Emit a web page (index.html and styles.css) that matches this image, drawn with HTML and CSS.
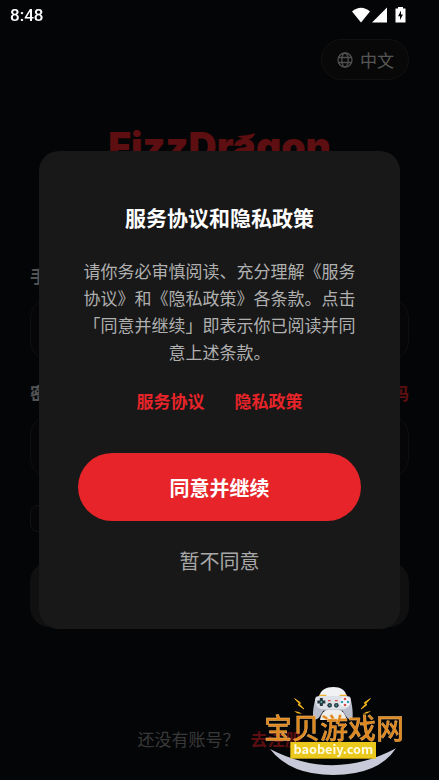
FILE: index.html
```html
<!DOCTYPE html>
<html lang="zh-CN">
<head>
  <meta charset="UTF-8" />
  <meta name="viewport" content="width=device-width, initial-scale=1.0" />
  <title>FizzDragon</title>
  <link rel="stylesheet" href="styles.css">
</head>
<body>
  <header class="status-bar">
    <span class="status-time">8:48</span>
    <svg class="status-icons" viewBox="0 0 54 16" aria-hidden="true">
      <path d="M0 4.500Q9 -3 18 4.500L9 15.500Z" />
      <path d="M35 0.500V15.500H20Z" />
      <path fill-rule="evenodd" d="M43.500 1.500H46V0H51V1.500H53.500V15.500H43.500ZM49 3.500L46 9.300H48V13L51 7.500H49Z" />
    </svg>
  </header>

  <main class="login-page">
    <div class="top-row">
      <button class="lang-btn" type="button">
        <svg class="globe" viewBox="0 0 16 16" aria-hidden="true">
          <circle cx="8" cy="8" r="7" />
          <ellipse cx="8" cy="8" rx="3.200" ry="7" />
          <path d="M1.500 5.500H14.500M1.500 10.500H14.500" />
        </svg>
        中文
      </button>
    </div>

    <div class="logo">
      FizzDr<span class="flame-a">a<svg viewBox="0 0 20 10" aria-hidden="true"><path d="M0 4C6 4 13 3 18 1C17 5 14 8 8 8Z" /></svg></span>gon
    </div>

    <form class="login-form">
      <div class="label-row">
        <label for="phone">手机号</label>
      </div>
      <input class="field" type="tel" id="phone" />
      <div class="label-row">
        <label for="password">密码</label>
        <a class="forgot" href="#">忘记密码</a>
      </div>
      <input class="field" type="password" id="password" />
      <input class="agree" type="checkbox" aria-label="同意" />
      <button class="login-btn" type="submit" aria-label="登录"></button>
    </form>

    <p class="register">还没有账号？<a href="#">去注册</a></p>
  </main>

  <div class="overlay">
    <div class="modal" role="dialog" aria-modal="true" aria-labelledby="modalTitle">
      <h1 id="modalTitle">服务协议和隐私政策</h1>
      <p class="modal-text">请你务必审慎阅读、充分理解《服务协议》和《隐私政策》各条款。点击「同意并继续」即表示你已阅读并同意上述条款。</p>
      <div class="modal-links">
        <a href="#">服务协议</a>
        <a href="#">隐私政策</a>
      </div>
      <button class="accept-btn" type="button">同意并继续</button>
      <button class="decline-btn" type="button">暂不同意</button>
    </div>
  </div>

  <svg class="watermark" viewBox="0 0 567 330">
    <path fill="#c9cad9" d="M60 237Q250 335 438 235Q385 315 250 315Q120 315 60 237Z" />
    <path fill="#b9bccb" d="M198 80C192 100 188 122 189 140Q190 150 198 148C208 146 212 134 220 122H278C286 134 290 146 300 148Q308 150 308 140C309 122 306 100 300 80Z" />
    <path fill="#f1f2f4" d="M208 78C212 60 228 51 250 51C272 51 286 60 290 78Z" />
    <path fill="#dfe1e8" d="M196 86Q198 78 210 78H288Q300 78 302 86C305 104 294 118 276 118H222C204 118 193 104 196 86Z" />
    <path fill="#eeeeec" d="M210 150Q214 120 236 119H264Q284 120 290 150Z" />
    <path stroke="#e9b02d" stroke-width="4" d="M207 76H229M269 76H291" />
    <path stroke="#26383e" stroke-width="9" d="M214 84V108M202 96H226" />
    <circle cx="214" cy="96" r="3" fill="#59b9b8" />
    <g fill="#26383e">
      <circle cx="239" cy="106" r="7" />
      <circle cx="259" cy="106" r="7" />
    </g>
    <g fill="#3f8f95">
      <circle cx="239" cy="106" r="3" />
      <circle cx="259" cy="106" r="3" />
    </g>
    <path stroke="#db4b45" stroke-width="4" d="M234 92H242M255 92H263" />
    <circle cx="285" cy="96" r="15" fill="#f5f6f8" />
    <circle cx="285" cy="87" r="4" fill="#d84b48" />
    <circle cx="294" cy="96" r="4" fill="#3a9bbb" />
    <circle cx="285" cy="105" r="4" fill="#d84b48" />
    <circle cx="276" cy="96" r="4" fill="#3a9bbb" />
    <g fill="#f3b51f">
      <path d="M134 86L151 98L149 103L162 117L145 105L147 100Z" stroke="#f3b51f" stroke-width="3" />
      <path d="M361 86L343 98L346 103L333 117L350 105L348 100Z" stroke="#f3b51f" stroke-width="3" />
      <path d="M132 123L147 126L156 132L142 130Z" />
      <path d="M363 123L348 126L339 132L353 130Z" />
    </g>
    <text class="mark-name" x="42" y="206">宝贝游戏网</text>
    <rect x="121" y="216" width="257" height="50" fill="#ebc81c" />
    <text class="mark-url" x="250" y="251">baobeiy.com</text>
  </svg>
</body>
</html>
```

FILE: styles.css
```css
:root {
  --red: #e62429;
  --page: #0a0d12;
  --modal: #181818;
}

* {
  box-sizing: border-box;
}

body {
  margin: 0;
  min-height: 100vh;
  display: flex;
  flex-direction: column;
  background: var(--page);
  color: #fff;
  font-family: "Noto Sans CJK SC", sans-serif;
  font-size: 17px;
  line-height: 27px;
}

a {
  color: var(--red);
  text-decoration: none;
}

button {
  border: none;
  font-family: inherit;
  cursor: pointer;
}

/* status bar stays above the dimmed page */
.status-bar {
  position: relative;
  z-index: 3;
  display: flex;
  justify-content: space-between;
  align-items: center;
  height: 30px;
  padding: 0 33px 0 10px;
}

.status-time {
  font-family: Roboto, sans-serif;
  font-size: 17px;
  font-weight: 500;
}

.status-icons {
  width: 54px;
  height: 16px;
  fill: #fff;
}

.login-page {
  flex: 1;
  display: flex;
  flex-direction: column;
  padding: 9px 30px 28px;
}

.top-row {
  display: flex;
  justify-content: flex-end;
}

.lang-btn {
  display: flex;
  align-items: center;
  gap: 7px;
  height: 41px;
  padding: 0 14px 0 15px;
  border: 1px solid #2c2c2c;
  border-radius: 21px;
  background: #161616;
  color: #d8d8d8;
  font-size: 17px;
}

.globe {
  width: 16px;
  height: 16px;
  fill: none;
  stroke: #c4c4c4;
  stroke-width: 1.3;
}

.logo {
  margin-top: 40px;
  text-align: center;
  color: var(--red);
  font-family: Inter, sans-serif;
  font-size: 39px;
  font-weight: 900;
  line-height: 52px;
}

.flame-a {
  position: relative;
}

.flame-a svg {
  position: absolute;
  left: 4px;
  top: 10px;
  width: 20px;
  height: 10px;
  fill: var(--red);
}

.login-form {
  display: flex;
  flex-direction: column;
  margin-top: 90px;
}

.label-row {
  display: flex;
  justify-content: space-between;
  margin-bottom: 9px;
  color: #d0d0d0;
  font-weight: 700;
}

.field {
  height: 63px;
  margin: 0 0 18px;
  padding: 0 20px;
  border: 1px solid #24262a;
  border-radius: 20px;
  background: #0f1114;
  color: #fff;
  font-size: 17px;
}

.agree {
  appearance: none;
  width: 27px;
  height: 27px;
  margin: 9px 0 30px;
  border: 1px solid #2c2e32;
  border-radius: 8px;
  background: #0f1114;
}

.login-btn {
  height: 65px;
  border-radius: 20px;
  background: #282828;
}

.register {
  display: flex;
  justify-content: center;
  gap: 11px;
  margin: auto 0 0;
  color: #8c8c8c;
}

.register a {
  font-weight: 700;
}

.overlay {
  position: fixed;
  inset: 0;
  z-index: 2;
  display: flex;
  align-items: center;
  justify-content: center;
  padding: 0 39px;
  background: rgba(0, 0, 0, 0.6);
}

.modal {
  display: flex;
  flex-direction: column;
  width: 100%;
  max-width: 420px;
  padding: 51px 39px 40px;
  border-radius: 20px;
  background: var(--modal);
  text-align: center;
}

.modal h1 {
  margin: 0 0 25px;
  font-size: 21px;
  font-weight: 700;
  line-height: 30px;
}

.modal-text {
  margin: 0 0 22px;
  color: #b0b0b0;
  text-spacing-trim: space-all;
}

.modal-links {
  display: flex;
  justify-content: center;
  gap: 30px;
  margin-bottom: 39px;
}

.modal-links a {
  font-weight: 700;
}

.accept-btn {
  height: 68px;
  margin-bottom: 10px;
  border-radius: 34px;
  background: var(--red);
  color: #fff;
  font-size: 20px;
  font-weight: 700;
}

.decline-btn {
  height: 58px;
  background: none;
  color: #a8a8a8;
  font-size: 20px;
}

.watermark {
  position: fixed;
  right: 0;
  bottom: 0;
  z-index: 4;
  width: 189px;
  height: 110px;
  pointer-events: none;
}

.mark-name {
  font-size: 84px;
  font-weight: 500;
  fill: #df861c;
  stroke: #f5c57c;
  stroke-width: 1;
}

.mark-url {
  font-size: 38px;
  font-weight: 700;
  text-anchor: middle;
  fill: #fffbe0;
}
```
